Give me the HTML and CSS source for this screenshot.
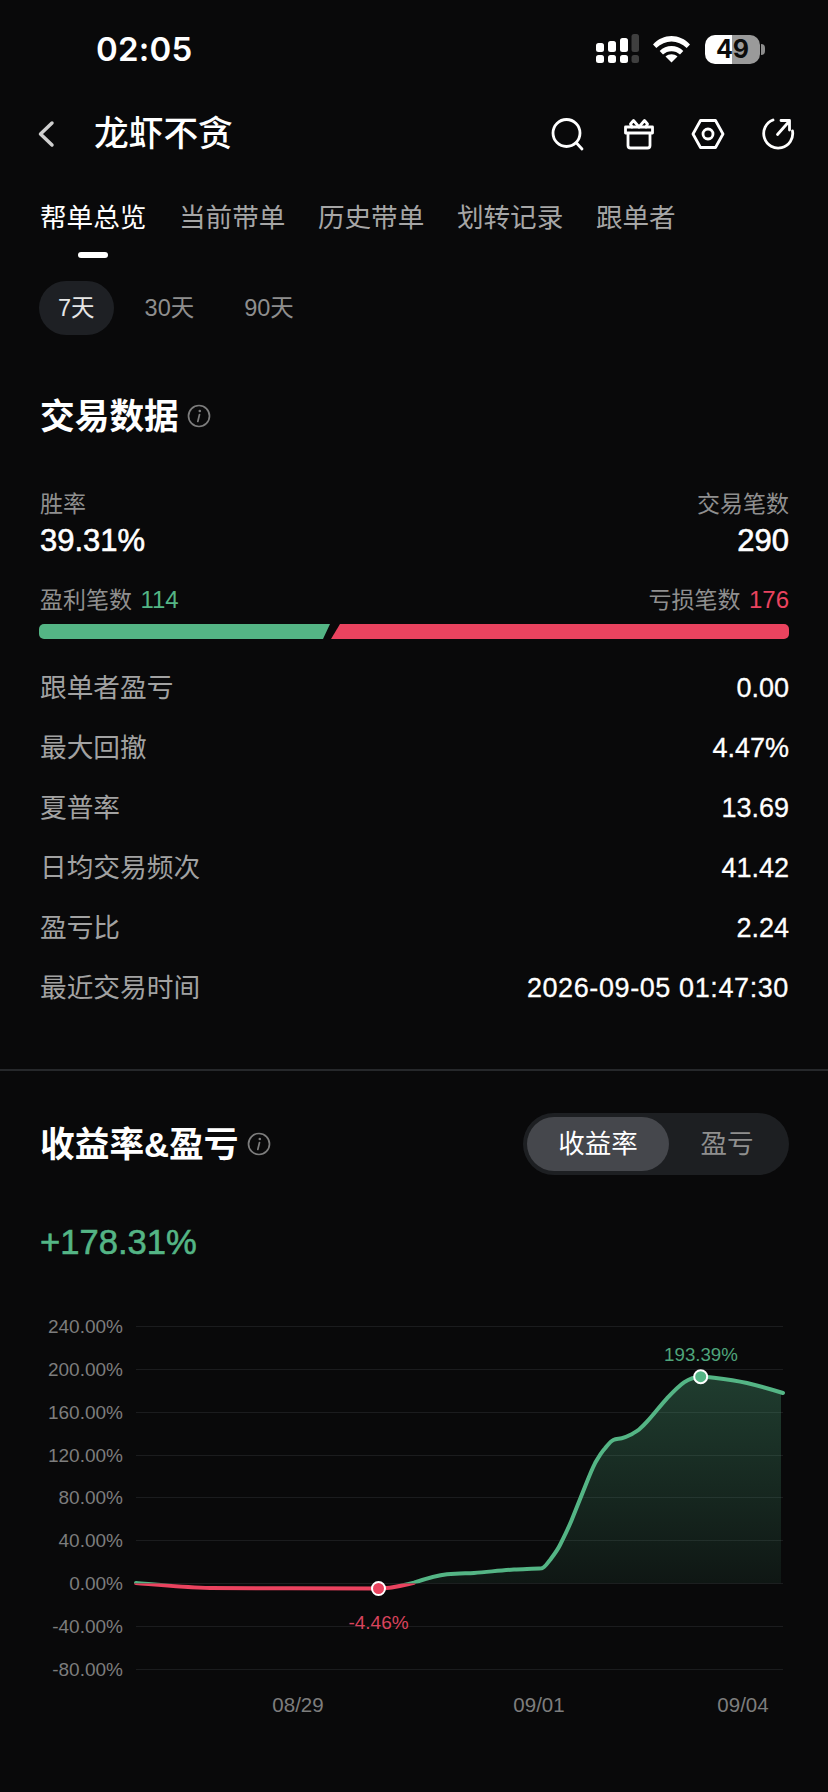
FILE: index.html
```html
<!DOCTYPE html>
<html lang="zh-CN">
<head>
<meta charset="utf-8">
<title>龙虾不贪</title>
<link rel="stylesheet" href="styles.css">
</head>
<body>
<div class="page">
  <header class="status">
    <span class="time">02:05</span>
    <div class="status-icons">
      <svg class="signal" width="43" height="30" viewBox="596 34 43 30" fill="#fff">
        <rect x="596" y="43" width="8" height="9" rx="2.5"/><rect x="608" y="41" width="8" height="11" rx="2.5"/><rect x="620" y="38" width="8" height="14" rx="2.5"/><rect x="631.5" y="34" width="7.5" height="18" rx="2.5" fill="#3f3f3f"/>
        <rect x="596" y="55" width="8" height="8" rx="2.5"/><rect x="608" y="55" width="8" height="8" rx="2.5"/><rect x="620" y="55" width="8" height="8" rx="2.5"/><rect x="631.5" y="55" width="7.5" height="8" rx="2.5" fill="#3f3f3f"/>
      </svg>
      <svg class="wifi" width="38" height="28" viewBox="653 35 38 28" fill="#fff">
        <path d="M653 44.500C663 33 680 33 690 44.500L686.700 48C678 39.300 665 39.300 656.300 48Z"/>
        <path d="M659.700 51C666 44.300 677 44.300 683.300 51L680 54.500C675.500 50 667.500 50 663 54.500Z"/>
        <path d="M665.500 56.500C669 53.500 674 53.500 677.500 56.500L671.500 62.500Z"/>
      </svg>
      <div class="battery-wrap">
        <div class="battery">49</div>
        <span class="battery-nub"></span>
      </div>
    </div>
  </header>

  <nav class="nav">
    <svg class="back" width="18" height="28" viewBox="0 0 18 28"><path d="M15 3L3.500 14L15 25"/></svg>
    <h1 class="nav-title">龙虾不贪</h1>
    <div class="nav-icons">
      <svg class="icon icon-search" width="34" height="34" viewBox="0 0 34 34"><circle cx="15.500" cy="16" r="13.500"/><path d="M25.500 26L31 32"/></svg>
      <svg class="icon icon-gift" width="34" height="34" viewBox="0 0 34 34"><path d="M4.500 10H31.500V16H4.500Z M7 16V28.500Q7 31 9.500 31H26.500Q29 31 29 28.500V16"/><path d="M18 10L12.500 3.500L9.500 7L11 10 M18 10L23.500 3.500L26.500 7L25 10"/></svg>
      <svg class="icon icon-hex" width="34" height="34" viewBox="0 0 34 34"><path d="M9.500 3.500H24.500L32 17L24.500 30.500H9.500L2 17Z"/><circle cx="17" cy="17" r="5"/></svg>
      <svg class="icon icon-share" width="34" height="34" viewBox="0 0 34 34"><path d="M12 3A14.500 14.500 0 1 0 31.500 14"/><path d="M16.500 17.500L28 4.500 M20 3.500H28.500V13"/></svg>
    </div>
  </nav>

  <div class="tabs">
    <div class="tab is-active"><span>帮单总览</span><i class="tab-mark"></i></div>
    <div class="tab"><span>当前带单</span></div>
    <div class="tab"><span>历史带单</span></div>
    <div class="tab"><span>划转记录</span></div>
    <div class="tab"><span>跟单者</span></div>
  </div>

  <div class="pills">
    <span class="pill is-active">7天</span>
    <span class="pill">30天</span>
    <span class="pill">90天</span>
  </div>

  <section class="trade">
    <div class="section-head">
      <h2 class="section-title">交易数据</h2>
      <svg class="info" width="24" height="24" viewBox="0 0 24 24"><circle cx="12" cy="12" r="10.500"/><circle cx="12.800" cy="7" r="1.300" class="info-dot"/><path d="M12.500 10.500L10.800 17.500"/></svg>
    </div>
    <div class="split stats">
      <div class="stat"><span class="muted">胜率</span><strong class="stat-value">39.31%</strong></div>
      <div class="stat stat-right"><span class="muted">交易笔数</span><strong class="stat-value">290</strong></div>
    </div>
    <div class="split counts">
      <span class="muted">盈利笔数 <b class="up">114</b></span>
      <span class="muted">亏损笔数 <b class="down">176</b></span>
    </div>
    <div class="ratio">
      <span class="ratio-win"></span>
      <span class="ratio-loss"></span>
    </div>
    <dl class="rows">
      <div class="row"><dt>跟单者盈亏</dt><dd>0.00</dd></div>
      <div class="row"><dt>最大回撤</dt><dd>4.47%</dd></div>
      <div class="row"><dt>夏普率</dt><dd>13.69</dd></div>
      <div class="row"><dt>日均交易频次</dt><dd>41.42</dd></div>
      <div class="row"><dt>盈亏比</dt><dd>2.24</dd></div>
      <div class="row"><dt>最近交易时间</dt><dd class="row-date">2026-09-05 01:47:30</dd></div>
    </dl>
  </section>

  <hr class="divider">

  <section class="returns">
    <div class="returns-head">
      <div class="section-head">
        <h2 class="section-title">收益率&amp;盈亏</h2>
        <svg class="info" width="24" height="24" viewBox="0 0 24 24"><circle cx="12" cy="12" r="10.500"/><circle cx="12.800" cy="7" r="1.300" class="info-dot"/><path d="M12.500 10.500L10.800 17.500"/></svg>
      </div>
      <div class="toggle">
        <span class="toggle-item is-active">收益率</span>
        <span class="toggle-item">盈亏</span>
      </div>
    </div>
    <div class="total">+178.31%</div>
  </section>

  <svg class="chart" width="828" height="430" viewBox="0 1300 828 430">
    <defs>
      <linearGradient id="area" x1="0" y1="1377" x2="0" y2="1583" gradientUnits="userSpaceOnUse">
        <stop offset="0" stop-color="#54b585" stop-opacity=".3"/>
        <stop offset="1" stop-color="#54b585" stop-opacity=".08"/>
      </linearGradient>
      <clipPath id="above"><rect x="0" y="1300" width="828" height="283.500"/></clipPath>
      <clipPath id="below"><rect x="0" y="1583.500" width="828" height="100"/></clipPath>
    </defs>
    <g class="grid">
      <path d="M136 1326.500H783M136 1369.500H783M136 1412.500H783M136 1455.500H783M136 1497.500H783M136 1540.500H783M136 1583.500H783M136 1626.500H783M136 1669.500H783"/>
    </g>
    <g class="y-labels">
      <text x="123" y="1333">240.00%</text>
      <text x="123" y="1376">200.00%</text>
      <text x="123" y="1419">160.00%</text>
      <text x="123" y="1462">120.00%</text>
      <text x="123" y="1504">80.00%</text>
      <text x="123" y="1547">40.00%</text>
      <text x="123" y="1590">0.00%</text>
      <text x="123" y="1633">-40.00%</text>
      <text x="123" y="1676">-80.00%</text>
    </g>
    <g class="x-labels">
      <text x="298" y="1711.500">08/29</text>
      <text x="539" y="1711.500">09/01</text>
      <text x="743" y="1711.500">09/04</text>
    </g>
    <path class="area" clip-path="url(#above)" d="M136 1583C160 1585 185 1587.500 210 1588C260 1588.500 330 1588 378 1588.500C392 1588.500 402 1585.500 414 1582.700C425 1579 436 1575.500 447 1574.300C458 1573 466 1573.500 474 1573C488 1572 500 1570.300 514 1569.500C524 1569 534 1568.800 541.700 1568.300C545 1567.500 547 1563.500 550 1560C553 1556 557 1551 560 1545C564 1537 568 1529 571.700 1520C575.500 1510.500 579 1501.500 583 1491.700C587 1482 590.500 1472 595 1463.300C598 1458 601 1452.500 605 1448.300C607.500 1445.500 610 1441.500 613.300 1440C616 1438.800 618.500 1439 621.700 1438.300C624.500 1437.700 627 1436.500 630 1435C633 1433.500 636 1431.500 639.300 1429.300C642 1427 644.500 1424.500 647 1421.700C654 1414 660 1406 667 1398.300C672 1393 678 1386.500 684 1382.300C689 1379 695 1376.800 700.700 1376.700C705 1376.600 709 1377 714 1377.700C725 1379 736 1380.500 747 1383C759 1385.800 770 1389 781 1392.500V1583.500H136Z"/>
    <path class="line line-up" clip-path="url(#above)" d="M136 1583C160 1585 185 1587.500 210 1588C260 1588.500 330 1588 378 1588.500C392 1588.500 402 1585.500 414 1582.700C425 1579 436 1575.500 447 1574.300C458 1573 466 1573.500 474 1573C488 1572 500 1570.300 514 1569.500C524 1569 534 1568.800 541.700 1568.300C545 1567.500 547 1563.500 550 1560C553 1556 557 1551 560 1545C564 1537 568 1529 571.700 1520C575.500 1510.500 579 1501.500 583 1491.700C587 1482 590.500 1472 595 1463.300C598 1458 601 1452.500 605 1448.300C607.500 1445.500 610 1441.500 613.300 1440C616 1438.800 618.500 1439 621.700 1438.300C624.500 1437.700 627 1436.500 630 1435C633 1433.500 636 1431.500 639.300 1429.300C642 1427 644.500 1424.500 647 1421.700C654 1414 660 1406 667 1398.300C672 1393 678 1386.500 684 1382.300C689 1379 695 1376.800 700.700 1376.700C705 1376.600 709 1377 714 1377.700C725 1379 736 1380.500 747 1383C759 1385.800 770 1389 783 1393"/>
    <path class="line line-down" clip-path="url(#below)" d="M136 1583C160 1585 185 1587.500 210 1588C260 1588.500 330 1588 378 1588.500C392 1588.500 402 1585.500 414 1582.700"/>
    <circle class="dot dot-down" cx="378.500" cy="1588.500" r="6.500"/>
    <circle class="dot dot-up" cx="700.700" cy="1376.700" r="6.500"/>
    <text class="peak" x="701" y="1360.500">193.39%</text>
    <text class="trough" x="378.500" y="1628.500">-4.46%</text>
  </svg>
</div>
</body>
</html>
```

FILE: styles.css
```css
* { box-sizing: border-box; }
html, body { margin: 0; padding: 0; background: #09090a; }
body {
  font-family: "Liberation Sans", "Noto Sans CJK SC", sans-serif;
  color: #fff;
}
.page { width: 828px; height: 1792px; overflow: hidden; background: #09090a; }
h1, h2, dl, dd, hr { margin: 0; }

.status { height: 98px; display: flex; align-items: center; justify-content: space-between; padding: 0 63px 0 96px; }
.time { font-family: Inter, sans-serif; font-weight: 600; font-size: 33px; letter-spacing: .2px; }
.status-icons { display: flex; align-items: center; gap: 14px; }
.signal, .wifi { display: block; }
.battery-wrap { display: flex; align-items: center; gap: 1px; }
.battery {
  width: 55px; height: 29px; border-radius: 10px;
  background: linear-gradient(90deg, #fff 49%, #9a9a9a 49%);
  color: #0b0b0b; font-family: Inter, sans-serif; font-weight: 700; font-size: 25px; line-height: 29px; text-align: center;
}
.battery-nub { width: 4px; height: 11px; border-radius: 0 4px 4px 0; background: #8c8c8c; }

.nav { height: 72px; display: flex; align-items: center; padding: 0 33px 0 37px; }
.back { fill: none; stroke: #cfcfcf; stroke-width: 3.500; stroke-linecap: round; stroke-linejoin: round; margin-right: 39px; }
.nav-title { font-size: 34.700px; font-weight: 500; line-height: 44px; }
.nav-icons { margin-left: auto; display: flex; align-items: center; gap: 36px; }
.icon { fill: none; stroke: #fff; stroke-width: 2.800; stroke-linecap: round; stroke-linejoin: round; display: block; }

.tabs { display: flex; align-items: flex-start; gap: 32.600px; padding: 30px 40px 0; }
.tab { display: flex; flex-direction: column; align-items: center; gap: 16px; font-size: 26.600px; line-height: 36px; color: #a6a6a6; }
.tab.is-active { color: #fff; }
.tab-mark { display: block; width: 30px; height: 6px; border-radius: 3px; background: #fff; }

.pills { display: flex; gap: 12px; padding: 23px 39px 0; }
.pill { height: 54px; padding: 0 19px; border-radius: 27px; font-size: 23.500px; line-height: 54px; color: #8e8e8e; }
.pill.is-active { background: #1e2024; color: #e6e6e6; }

.trade { padding: 58px 39px 0 40px; }
.section-head { display: flex; align-items: center; gap: 8px; }
.section-title { font-size: 34.700px; font-weight: 700; line-height: 44px; padding-top: 2px; }
.info { fill: none; stroke: #7d7d7d; stroke-width: 1.700; stroke-linecap: round; display: block; }
.info-dot { fill: #7d7d7d; stroke: none; }

.muted { color: #8f8f8f; font-size: 23px; line-height: 28px; }
.split { display: flex; justify-content: space-between; }
.stats { margin-top: 51px; }
.stat { display: flex; flex-direction: column; gap: 5px; }
.stat-right { align-items: flex-end; }
.stat-value { font-size: 31px; line-height: 36px; font-weight: 400; -webkit-text-stroke: .6px #fff; }
.counts { margin-top: 27px; }
.counts b { font-weight: 400; font-size: 24px; margin-left: 2px; }
.up { color: #54b585; }
.down { color: #ea435f; }

.ratio { display: flex; gap: 1px; height: 15px; margin: 10px 0 0 -1px; }
.ratio-win { flex: 0 0 291px; background: #54b585; border-radius: 5px 0 0 5px; clip-path: polygon(0 0, 100% 0, calc(100% - 7px) 100%, 0 100%); }
.ratio-loss { flex: 1; background: #ea435f; border-radius: 0 5px 5px 0; clip-path: polygon(9px 0, 100% 0, 100% 100%, 0 100%); }

.rows { margin-top: 18px; }
.row { height: 60px; display: flex; align-items: center; justify-content: space-between; }
.row dt { font-size: 26.700px; color: #a2a2a2; padding-bottom: 3px; }
.row dd { font-size: 27px; font-weight: 400; color: #fff; padding-top: 2px; -webkit-text-stroke: .3px #fff; }
.row-date { letter-spacing: .6px; }

.divider { height: 2px; border: 0; background: #26282b; margin-top: 52px; }

.returns { padding: 42px 39px 0 40px; }
.returns-head { display: flex; align-items: center; justify-content: space-between; }
.toggle { width: 266px; height: 62px; display: flex; align-items: center; padding: 4px; background: #1d1f22; border-radius: 31px; }
.toggle-item { flex: 1; height: 54px; line-height: 54px; text-align: center; font-size: 26.500px; color: #8f8f8f; border-radius: 27px; }
.toggle-item.is-active { flex: 0 0 142px; background: #45474c; color: #fff; }
.total { margin-top: 45px; font-size: 34.600px; font-weight: 400; line-height: 44px; color: #54b585; -webkit-text-stroke: .6px #54b585; }

.chart { display: block; margin-top: 36px; font-family: "Liberation Sans", sans-serif; }
.grid path { fill: none; stroke: #1b1c1e; stroke-width: 1; }
.y-labels text { fill: #7d7d7d; font-size: 19px; text-anchor: end; }
.x-labels text { fill: #7d7d7d; font-size: 20.500px; text-anchor: middle; }
.area { fill: url(#area); }
.line { fill: none; stroke-width: 4; stroke-linecap: round; stroke-linejoin: round; }
.line-up { stroke: #54b585; }
.line-down { stroke: #ea435f; }
.dot { stroke: #fff; stroke-width: 2; }
.dot-down { fill: #ea435f; }
.dot-up { fill: #54b585; }
.peak { fill: #4fa57b; font-size: 18.700px; text-anchor: middle; }
.trough { fill: #d9435c; font-size: 19px; text-anchor: middle; }
```
